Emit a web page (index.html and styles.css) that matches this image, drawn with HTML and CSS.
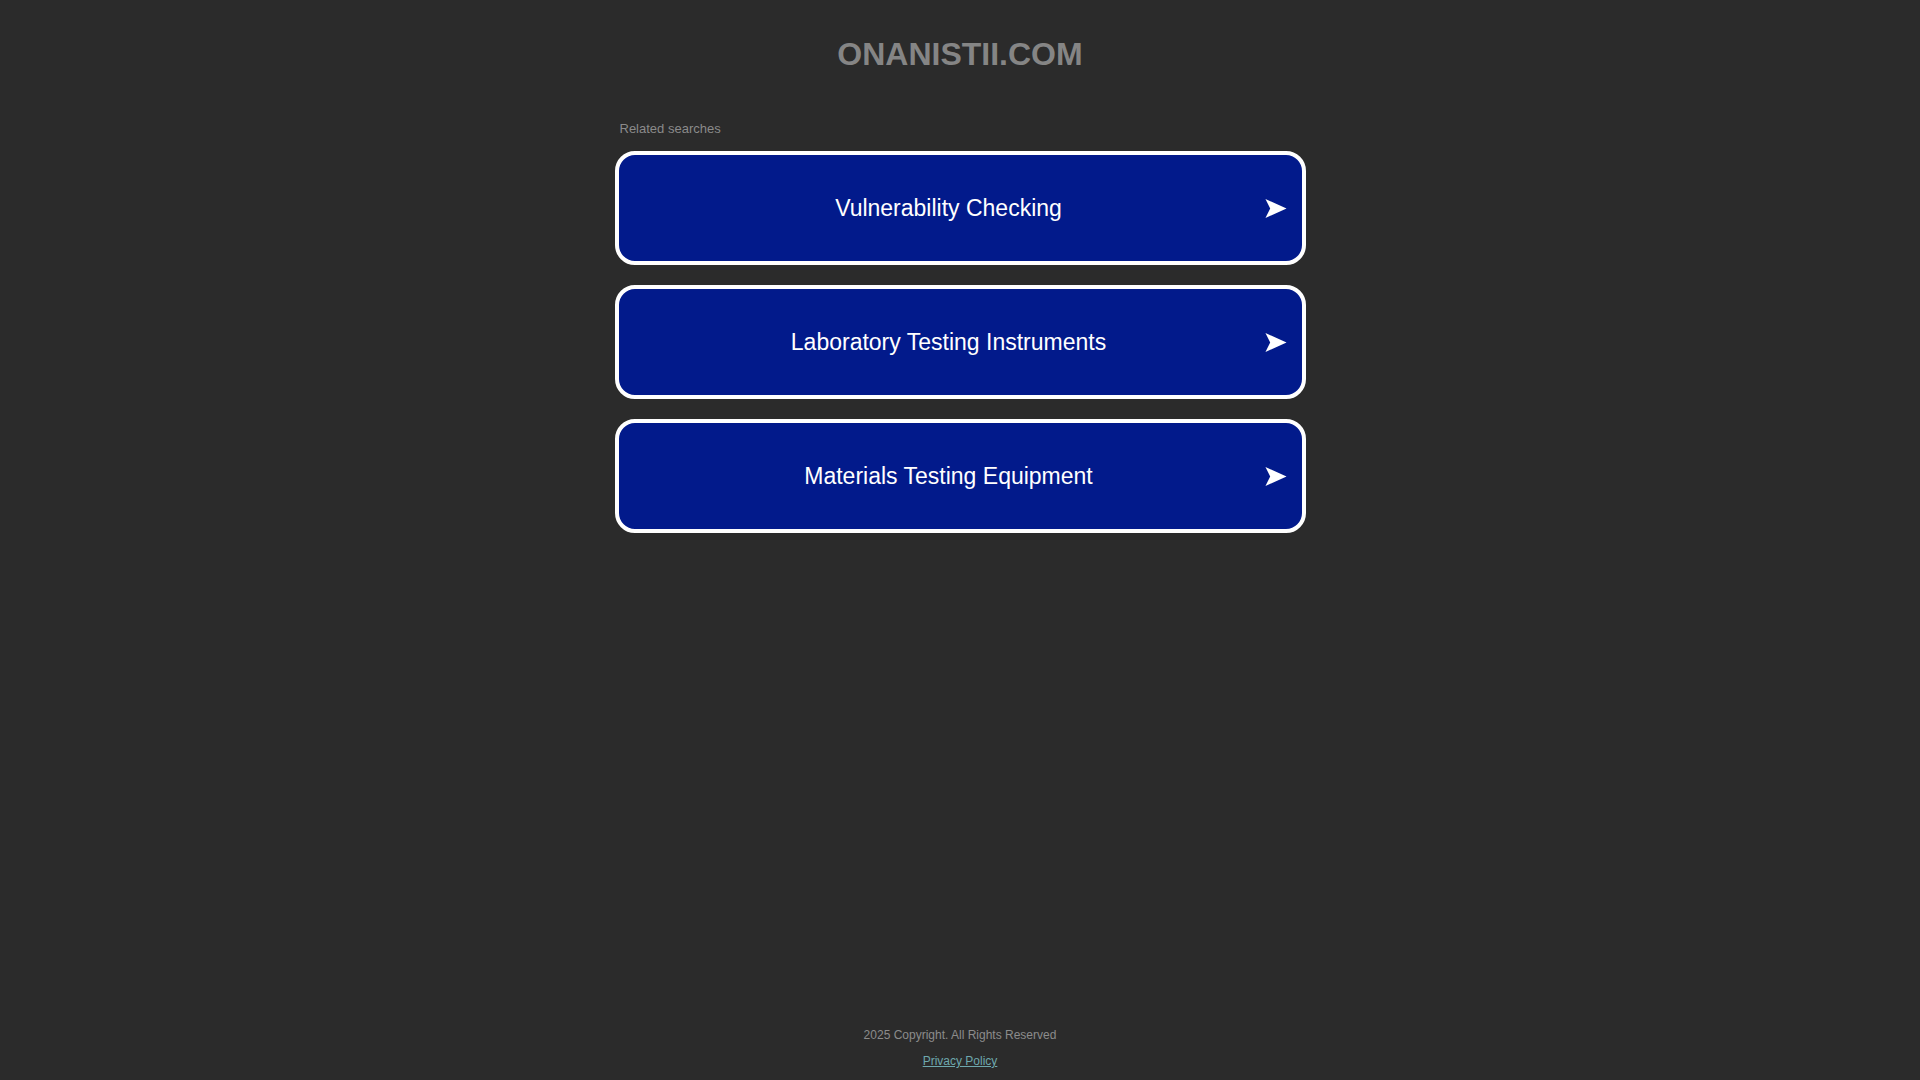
FILE: index.html
```html
<!DOCTYPE html>
<html lang="en">
<head>
<meta charset="utf-8">
<title>onanistii.com</title>
<link rel="stylesheet" href="styles.css">
</head>
<body>
<div class="page">
  <header class="header">
    <h1 class="domain">ONANISTII.COM</h1>
  </header>
  <main class="content">
    <div class="related">Related searches</div>
    <ul class="links">
      <li><a class="link-card" href="#"><span class="link-text">Vulnerability Checking</span><svg class="arrow" viewBox="0 0 20 18" width="22" height="19"><polygon points="0,0 20,9 0,18 4.5,9" fill="#fff"/></svg></a></li>
      <li><a class="link-card" href="#"><span class="link-text">Laboratory Testing Instruments</span><svg class="arrow" viewBox="0 0 20 18" width="22" height="19"><polygon points="0,0 20,9 0,18 4.5,9" fill="#fff"/></svg></a></li>
      <li><a class="link-card" href="#"><span class="link-text">Materials Testing Equipment</span><svg class="arrow" viewBox="0 0 20 18" width="22" height="19"><polygon points="0,0 20,9 0,18 4.5,9" fill="#fff"/></svg></a></li>
    </ul>
  </main>
  <footer class="footer">
    <div class="copyright">2025 Copyright. All Rights Reserved</div>
    <a class="privacy" href="#">Privacy Policy</a>
  </footer>
</div>
</body>
</html>
```

FILE: styles.css
```css
html, body {
  margin: 0;
  padding: 0;
  background: #2b2b2b;
}
body {
  font-family: "Liberation Sans", Arial, sans-serif;
}
.page {
  min-height: 100vh;
  display: flex;
  flex-direction: column;
  align-items: center;
}
.header {
  padding-top: 36px;
}
.domain {
  margin: 0;
  font-size: 32px;
  line-height: 36px;
  font-weight: bold;
  color: #858585;
  text-align: center;
}
.content {
  width: 691px;
  margin-top: 49px;
}
.related {
  font-size: 13px;
  line-height: 16px;
  color: #8a8a8a;
  padding-left: 5px;
}
.links {
  list-style: none;
  margin: 14px 0 0 0;
  padding: 0;
  display: flex;
  flex-direction: column;
  gap: 20px;
}
.link-card {
  box-sizing: border-box;
  height: 114px;
  display: flex;
  align-items: center;
  background: #021a8b;
  border: 4px solid #ffffff;
  border-radius: 20px;
  padding: 0 15px 0 14px;
  text-decoration: none;
  color: #ffffff;
}
.link-text {
  flex: 1;
  text-align: center;
  font-size: 23px;
}
.arrow {
  flex: none;
  display: block;
}
.footer {
  margin-top: auto;
  padding-bottom: 12px;
  display: flex;
  flex-direction: column;
  align-items: center;
  gap: 12px;
  font-size: 12px;
  line-height: 14px;
}
.copyright {
  color: #8c8c8c;
}
.privacy {
  color: #6ea8ae;
  text-decoration: underline;
}
```
